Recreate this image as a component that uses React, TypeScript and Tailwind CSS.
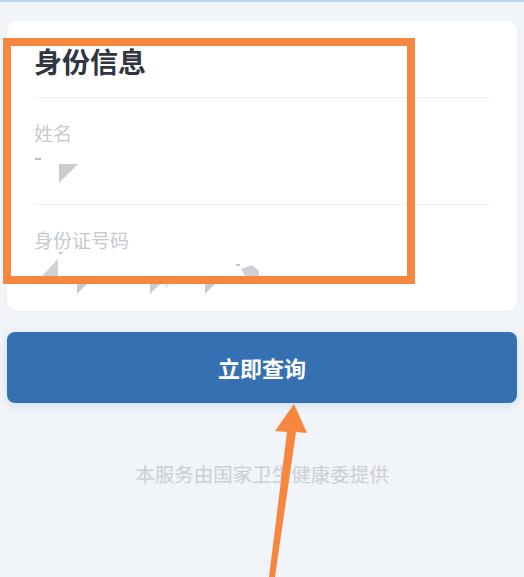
import React from "react";

const cjk = { fontFamily: '"Noto Sans CJK SC", "Noto Sans", sans-serif' };

function Field({ label, children, last }: { label: string; children: React.ReactNode; last?: boolean }) {
  return (
    <div className={last ? "" : "border-b border-[#eef0f3]"}>
      <div className="pt-[25px] text-[19px] leading-[19px] text-[#c6c9cd]">{label}</div>
      <div className="-ml-[34px] h-[62px]">{children}</div>
    </div>
  );
}

export default function App() {
  return (
    <div className="relative min-h-[577px] w-[524px] overflow-hidden bg-[#f1f4f8]" style={cjk}>
      <div className="h-[2px] bg-[#b6d8f3]" />
      <div className="px-[7px] pt-[19px]">
        <div className="rounded-[10px] bg-white px-[27px] pt-[26px] shadow-[0_1px_3px_rgba(0,0,0,0.04)]">
          <h1 className="pb-[22px] text-[28px] font-bold leading-[28px] text-[#2f3541]">身份信息</h1>
          <div className="border-t border-[#eef0f3]">
            <Field label="姓名">
              {/* blurred value */}
              <svg width="100" height="62" viewBox="0 0 100 62">
                <rect x="35" y="16" width="6" height="2" fill="#b9bcc0" />
                <polygon points="59,22 78,22 59,41" fill="#c9cbce" />
              </svg>
            </Field>
            <Field label="身份证号码" last>
              <svg width="300" height="62" viewBox="0 0 300 62">
                <polygon points="59,3 64,3 59,6" fill="#c4c6c9" />
                <polygon points="58,10 58,27 42,27" fill="#cfd1d4" />
                <polygon points="77,34 88,34 77,45" fill="#c9cbce" />
                <polygon points="150,34 161,34 150,45" fill="#c9cbce" />
                <polygon points="165,34 171,34 165,40" fill="#e3e5e7" />
                <polygon points="205,34 216,34 205,45" fill="#c9cbce" />
                <polygon points="241,20 252,16 259,22 259,27 245,27" fill="#cfd1d4" />
                <rect x="236" y="15" width="4" height="2" fill="#c4c6c9" />
              </svg>
            </Field>
          </div>
        </div>

        <button className="mt-[21px] flex h-[71px] w-full items-center justify-center rounded-[8px] bg-[#3470b2] text-[22px] font-bold text-white shadow-[0_3px_8px_rgba(52,112,178,0.15)]">
          立即查询
        </button>

        <p className="mt-[61px] text-center text-[19.5px] leading-[20px] text-[#cbced2]">本服务由国家卫生健康委提供</p>
      </div>

      {/* annotation overlay */}
      <svg className="pointer-events-none absolute left-0 top-0" width="524" height="577" viewBox="0 0 524 577">
        <rect x="7" y="42" width="404" height="238" fill="none" stroke="#f7873f" strokeWidth="8" />
        <polygon points="294,404 307,433 296,432 275,577 269,577 287,432 275,431" fill="#f7873f" />
      </svg>
    </div>
  );
}
